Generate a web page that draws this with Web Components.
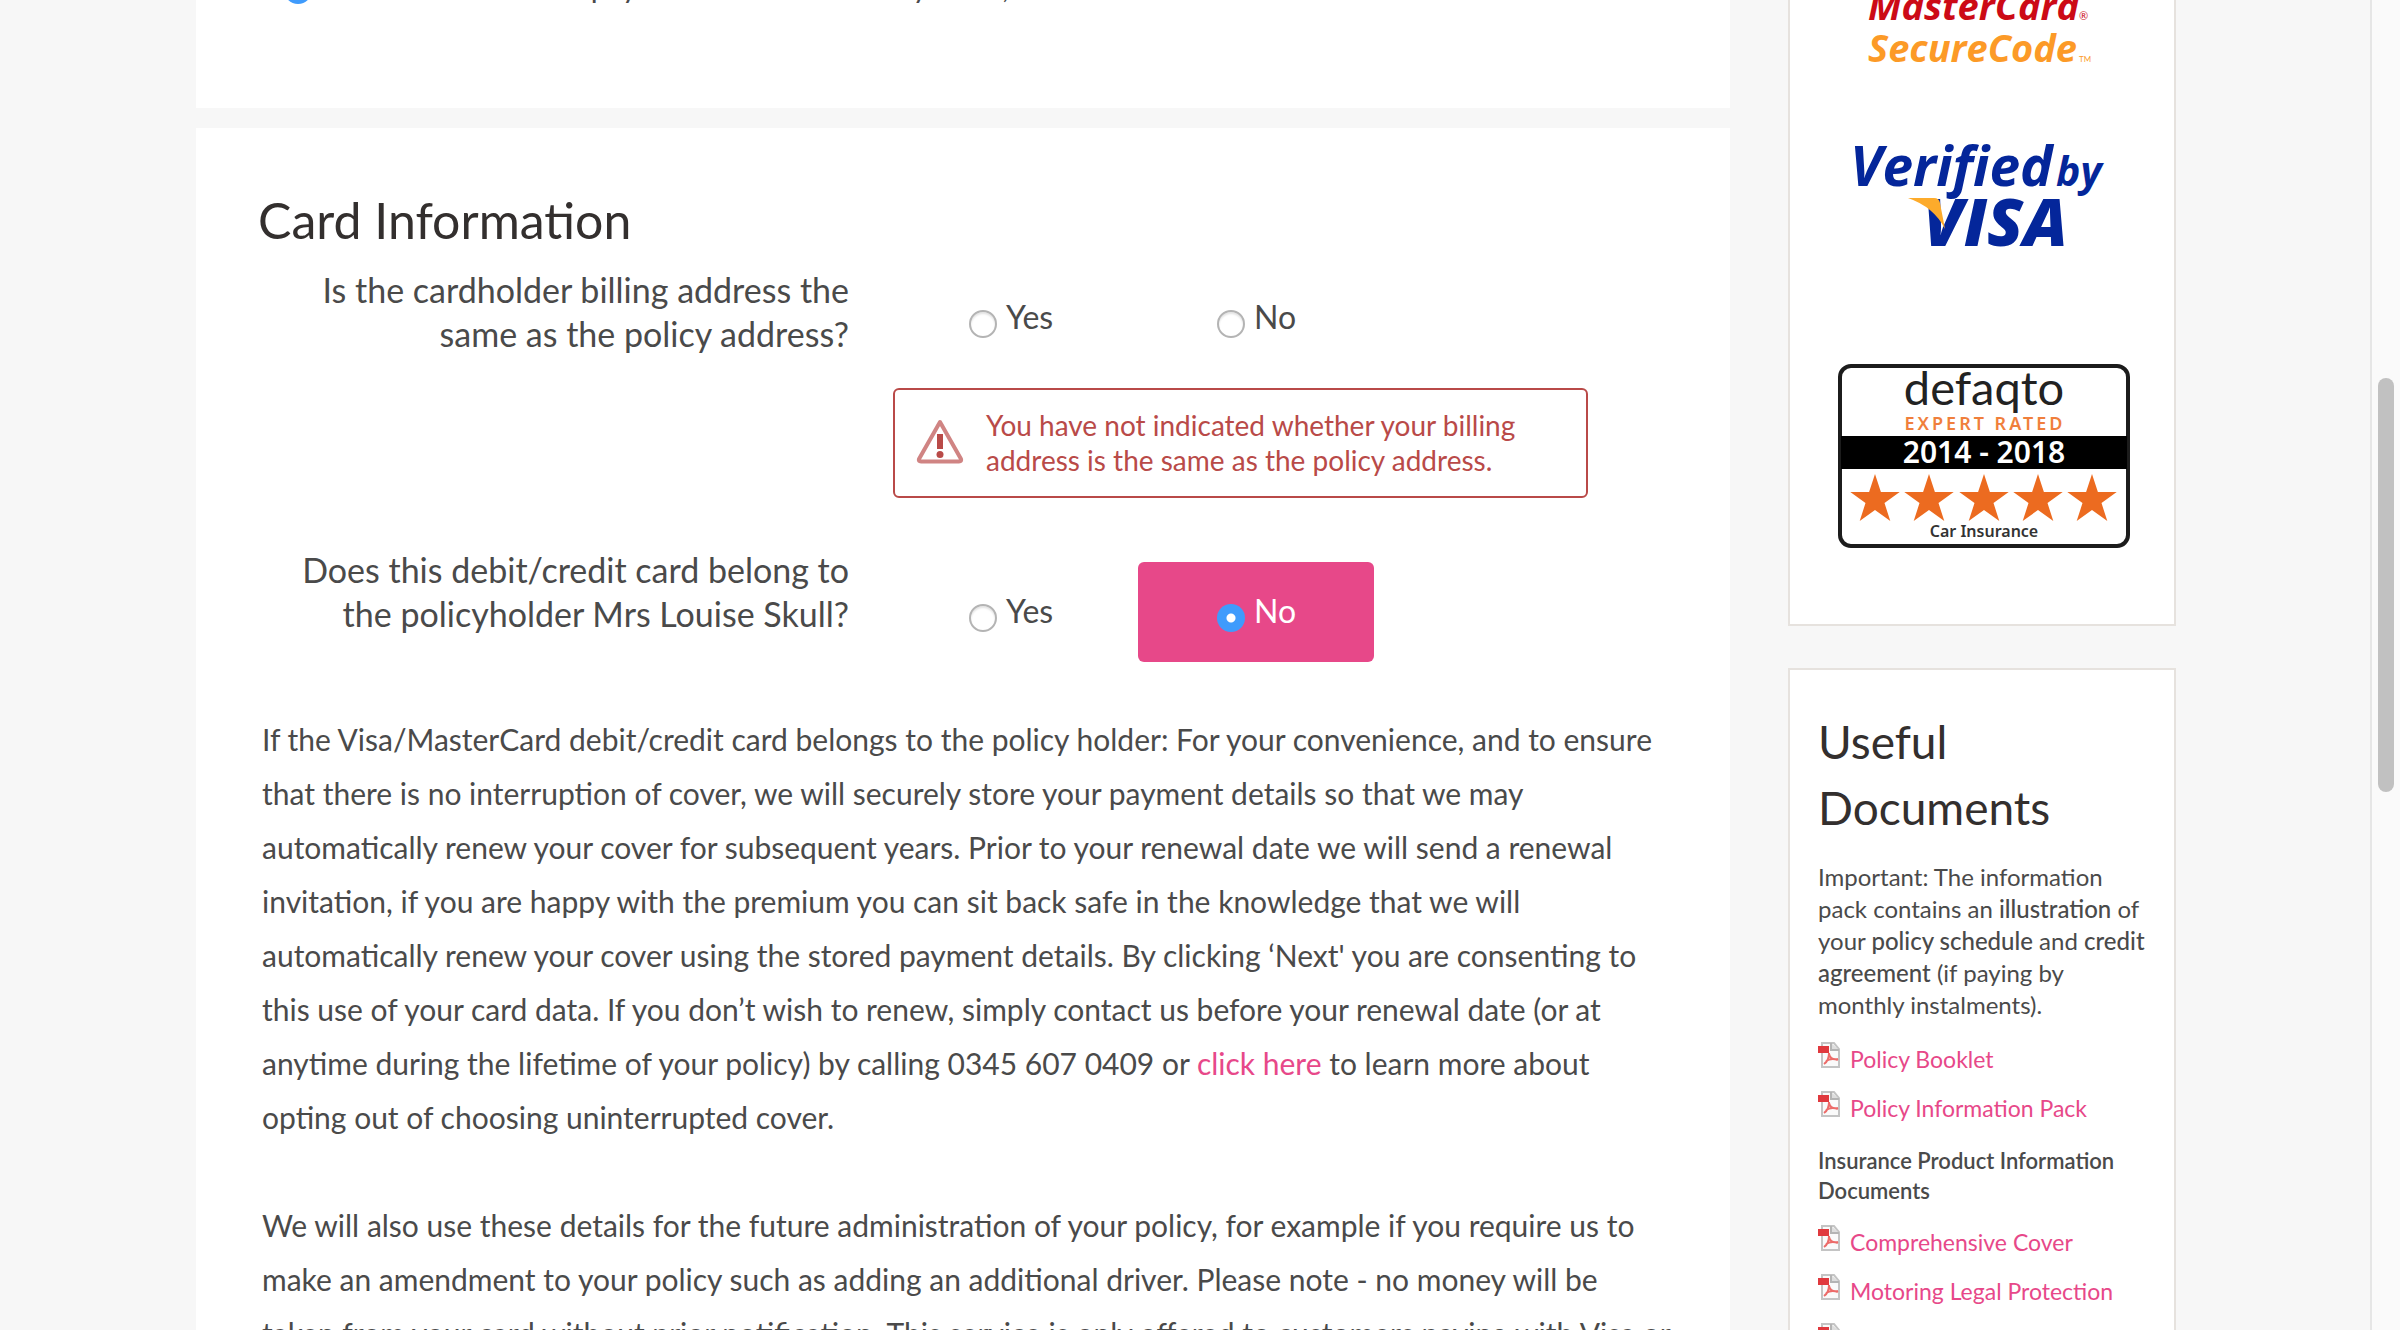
<!DOCTYPE html>
<html lang="en">
<head>
<meta charset="utf-8">
<title>Card Information</title>
<style>
  html, body { margin: 0; height: 100%; overflow: hidden; }
  body { background: #f7f7f7; color: #4a4a4a; font: 30px/54px Lato, "Open Sans", sans-serif; }
  a { color: #e74889; text-decoration: none; }
  p { margin: 0; }
  h1, h2 { margin: 0; font-weight: 400; color: #332f2e; }
  h1 { font-size: 50px; line-height: 64px; margin-bottom: 16px; }
  h2 { font-size: 46px; line-height: 66px; margin-bottom: 20px; }
  .terms { display: grid; gap: 54px; margin: 50px 0 0 4px; white-space: nowrap; }
  .small { font-size: 24px; line-height: 32px; margin-bottom: 20px; white-space: nowrap; }
  b { font-weight: 500; }
  h3 { margin: 20px 0 18px; font-size: 22px; line-height: 30px; font-weight: 600; white-space: nowrap; }
</style>
</head>
<body>
<quote-page>
  <content-panel slot="main" kind="previous">
    <payment-choice>I have chosen this payment as authorised by debit, or credit card</payment-choice>
  </content-panel>
  <content-panel slot="main">
    <h1>Card Information</h1>
    <yes-no-question name="billing">
      Is the cardholder billing address the<br>same as the policy address?
      <error-note slot="error">You have not indicated whether your billing<br>address is the same as the policy address.</error-note>
    </yes-no-question>
    <yes-no-question name="holder" answer="No">
      Does this debit/credit card belong to<br>the policyholder Mrs Louise Skull?
    </yes-no-question>
    <div class="terms">
      <p>If the Visa/MasterCard debit/credit card belongs to the policy holder: For your convenience, and to ensure<br>that there is no interruption of cover, we will securely store your payment details so that we may<br>automatically renew your cover for subsequent years. Prior to your renewal date we will send a renewal<br>invitation, if you are happy with the premium you can sit back safe in the knowledge that we will<br>automatically renew your cover using the stored payment details. By clicking ‘Next' you are consenting to<br>this use of your card data. If you don’t wish to renew, simply contact us before your renewal date (or at<br>anytime during the lifetime of your policy) by calling 0345 607 0409 or <a href="#optout">click here</a> to learn more about<br>opting out of choosing uninterrupted cover.</p>
      <p>We will also use these details for the future administration of your policy, for example if you require us to<br>make an amendment to your policy such as adding an additional driver. Please note - no money will be<br>taken from your card without prior notification. This service is only offered to customers paying with Visa or</p>
    </div>
  </content-panel>

  <side-panel slot="side" kind="logos"><trust-logos></trust-logos></side-panel>
  <side-panel slot="side">
    <h2>Useful<br>Documents</h2>
    <p class="small">Important: The information<br>pack contains an <b>illustration</b> of<br>your <b>policy schedule</b> and <b>credit</b><br><b>agreement</b> (if paying by<br>monthly instalments).</p>
    <doc-list>
      <pdf-link href="#booklet">Policy Booklet</pdf-link>
      <pdf-link href="#pack">Policy Information Pack</pdf-link>
    </doc-list>
    <h3>Insurance Product Information<br>Documents</h3>
    <doc-list>
      <pdf-link href="#comprehensive">Comprehensive Cover</pdf-link>
      <pdf-link href="#legal">Motoring Legal Protection</pdf-link>
      <pdf-link href="#breakdown">Breakdown Cover</pdf-link>
    </doc-list>
  </side-panel>
</quote-page>

<script>
const radioCss = `
  input { appearance: none; box-sizing: border-box; flex: none; width: 28px; height: 28px; margin: 0;
    border: 2px solid #b4b4b4; border-radius: 50%; background: #fff; box-shadow: inset 0 2px 2px #e4e4e4; }
  input:checked { border: 0; box-shadow: none; background: radial-gradient(circle, #fff 0 4px, #3f9bfc 5px); }`;

const define = (name, html) => customElements.define(name, class extends HTMLElement {
  connectedCallback() {
    if (this.shadowRoot) return;
    const root = this.attachShadow({ mode: 'open' });
    root.innerHTML = typeof html === 'function' ? html(this) : html;
  }
});

define('quote-page', `
  <style>
    :host { display: grid; grid-template-columns: minmax(0, 1fr) 28px; height: 100vh; overflow: hidden; }
    .view { overflow: hidden; }
    .columns { display: flex; align-items: flex-start; gap: 58px; max-width: 1980px; margin: -60px auto 0; }
    .main { flex: 1; min-width: 0; display: grid; grid-template-columns: minmax(0, 1fr); gap: 20px; }
    .side { flex: none; width: 388px; display: grid; gap: 42px; }
    .track { box-sizing: border-box; box-shadow: -2px 0 #e6e6e6; background: #fafafa; padding: 378px 6px 0; }
    .thumb { height: 414px; border-radius: 8px; background: #c1c1c1; }
  </style>
  <div class="view"><div class="columns">
    <main class="main"><slot name="main"></slot></main>
    <aside class="side"><slot name="side"></slot></aside>
  </div></div>
  <div class="track"><div class="thumb"></div></div>`);

define('content-panel', `
  <style>
    :host { display: block; background: #fff; padding: 60px 62px; }
    :host([kind="previous"]) { padding: 24px 88px 92px; }
  </style><slot></slot>`);

define('payment-choice', `
  <style>
    :host { display: block; }
    label { display: flex; align-items: center; gap: 36px; line-height: 44px; white-space: nowrap; }
    span { padding-bottom: 8px; }
    ${radioCss}
  </style>
  <label><input type="radio" name="payment" checked><span><slot></slot></span></label>`);

define('yes-no-question', el => {
  const name = el.getAttribute('name'), answer = el.getAttribute('answer');
  const option = value => `<label class="option"><input type="radio" name="${name}" value="${value}" ${answer === value ? 'checked' : ''}><span>${value}</span></label>`;
  return `
  <style>
    :host { display: grid; grid-template-columns: 591px minmax(0, 1fr); column-gap: 41px; align-items: start; font-size: 34px; line-height: 44px; }
    :host([answer]) { margin-top: 50px; }
    .question { text-align: right; }
    .options { display: flex; gap: 12px; }
    :host([answer]) .options { padding-top: 14px; }
    .option { box-sizing: border-box; width: 236px; height: 100px; display: flex; align-items: center; gap: 9px; padding-left: 79px; border-radius: 6px; font-size: 32px; }
    .option span { padding-bottom: 2px; }
    .option:has(input:checked) { background: #e74889; color: #fff; }
    ${radioCss}
    .option input { margin-top: 12px; }
    ::slotted([slot="error"]) { grid-column: 2; }
  </style>
  <div class="question" id="q"><slot></slot></div>
  <div class="options" role="radiogroup" aria-labelledby="q">${option('Yes')}${option('No')}</div>
  <slot name="error"></slot>`;
});

define('error-note', `
  <style>
    :host { box-sizing: border-box; display: flex; align-items: center; gap: 22px; width: 695px; height: 110px; margin: 20px 0 0 3px; padding: 0 21px;
      border: 2px solid #b94a48; border-radius: 6px; color: #b94a48; font-size: 28px; line-height: 35px; white-space: nowrap; }
    svg { flex: none; }
  </style>
  <svg width="48" height="50" viewBox="0 0 48 50" aria-hidden="true">
    <path d="M24 4 45 41Q46 43.500 43 43.500H5Q2 43.500 3 41Z" fill="none" stroke="#d08483" stroke-width="4" stroke-linejoin="round"/>
    <path d="M24 16V31" stroke="#b94a48" stroke-width="6"/><circle cx="24" cy="36.500" r="3.500" fill="#b94a48"/>
  </svg>
  <div><slot></slot></div>`);

define('side-panel', `
  <style>
    :host { display: block; border: 2px solid #e6e2de; background: #fff; padding: 39px 20px 60px 28px; }
    :host([kind="logos"]) { padding: 0 0 72px; }
  </style><slot></slot>`);

define('doc-list', `<style>:host { display: grid; gap: 13px; }</style><slot></slot>`);

define('pdf-link', el => `
  <style>
    :host { display: block; font-size: 23px; line-height: 36px; white-space: nowrap; }
    a { display: flex; gap: 10px; color: #e74889; text-decoration: none; }
    svg { flex: none; margin-top: 1px; }
  </style>
  <a href="${el.getAttribute('href')}">
    <svg width="22" height="26" viewBox="0 0 22 26" aria-hidden="true">
      <path d="M4 1H16L21 7V25H4Z" fill="#fafafa" stroke="#c4c4c4" stroke-width="2"/>
      <path d="M13 1V8H21" fill="#ddd" stroke="#b4b4b4" stroke-width="2"/>
      <path d="M0 4H11V11H0Z" fill="#e0393e"/>
      <path d="M11 11C11 16 9 20 6 22M11 12C12 16 15 18 20 17M8 19C11 17 15 16 20 18" fill="none" stroke="#ec6b69" stroke-width="2"/>
    </svg><span><slot></slot></span>
  </a>`);

const star = cx => {
  const pts = [];
  for (let i = 0; i < 10; i++) {
    const r = i % 2 ? 10 : 26, t = Math.PI * (i / 5 - 0.5);
    pts.push(`${(cx + r * Math.cos(t)).toFixed(1)},${(140 + r * Math.sin(t)).toFixed(1)}`);
  }
  return `<polygon points="${pts.join(' ')}"/>`;
};

define('trust-logos', () => `
  <style>
    :host { display: flex; flex-direction: column; align-items: center; }
    svg { display: block; }
    .brand { font-family: "Open Sans", sans-serif; font-weight: 700; font-style: italic; }
    .visa { margin: 60px 0 100px; }
    .noto { font-family: "Noto Sans", sans-serif; font-weight: 600; }
  </style>
  <svg width="240" height="128" viewBox="0 0 240 128" role="img" aria-label="MasterCard SecureCode">
    <g class="brand" font-size="38">
      <text x="6" y="78" fill="#cc0a16">MasterCard</text>
      <text x="6" y="120" fill="#fc9a27">SecureCode</text>
    </g>
    <text x="217" y="78" font-size="11" fill="#cc0a16">®</text>
    <text x="217" y="120" font-size="8" fill="#fc9a27">TM</text>
  </svg>
  <svg class="visa" width="260" height="130" viewBox="0 0 260 130" role="img" aria-label="Verified by Visa">
    <g fill="#04269a" class="brand">
      <text x="-2" y="56" font-size="55">Verified</text>
      <text x="204" y="56" font-size="41">by</text>
      <text x="71" y="116" font-size="66" font-weight="800">VISA</text>
    </g>
    <path d="M56 68H82Q87 68 88 73L93 99Q82 77 56 68Z" fill="#fdab2b"/>
  </svg>
  <svg width="300" height="192" viewBox="0 0 300 192" role="img" aria-label="Defaqto expert rated">
    <rect x="8" y="6" width="288" height="180" rx="11" fill="#fff" stroke="#1c1c1c" stroke-width="4"/>
    <path d="M9 76H295V109H9Z" fill="#000"/>
    <g text-anchor="middle" class="noto">
      <text x="152" y="45" font-size="47" fill="#222" style="font-family:Lato;font-weight:400">defaqto</text>
      <text x="153" y="70" font-size="18" letter-spacing="3" fill="#f07f3c">EXPERT RATED</text>
      <text x="152" y="103" font-size="30" fill="#fff">2014 - 2018</text>
      <text x="152" y="177" font-size="16" fill="#333">Car Insurance</text>
    </g>
    <g fill="#ec6b20">${[43, 97, 152, 206, 260].map(star).join('')}</g>
  </svg>`);
</script>
</body>
</html>
